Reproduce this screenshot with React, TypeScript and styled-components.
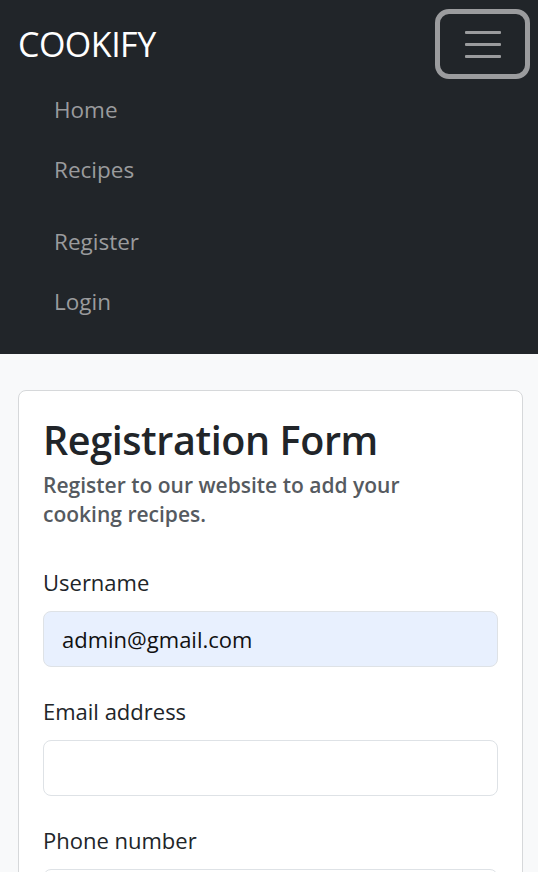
import { createGlobalStyle, styled } from "styled-components"

const GlobalStyle = createGlobalStyle`
  * { box-sizing: border-box; }
  body {
    margin: 0;
    background-color: #f8f9fa;
    font-family: "Open Sans", "Noto Sans", sans-serif;
    color: #212529;
  }
`

const Navbar = styled.nav`
  background-color: #212529;
  padding: 9px 8px 22px 18px;
`

const TopRow = styled.div`
  display: flex;
  align-items: center;
  justify-content: space-between;
`

const Brand = styled.a`
  color: #fff;
  font-size: 34px;
  line-height: 1;
  text-decoration: none;
  letter-spacing: -0.5px;
`

const Toggler = styled.button`
  width: 95px;
  height: 70px;
  border: 5px solid #9b9c9e;
  border-radius: 14px;
  background: transparent;
  display: flex;
  flex-direction: column;
  align-items: center;
  justify-content: center;
  gap: 9px;
  padding: 0;
  span {
    display: block;
    width: 36px;
    height: 3px;
    background-color: #9b9c9e;
    border-radius: 1px;
  }
`

const NavList = styled.ul<{ gap?: number }>`
  list-style: none;
  margin: ${props => props.gap || 0}px 0 0;
  padding: 0 0 0 36px;
  li a {
    display: block;
    height: 60px;
    line-height: 60px;
    font-size: 22.5px;
    color: #9a9b9d;
    text-decoration: none;
  }
`

const Main = styled.main`
  padding: 36px 15px 0 18px;
`

const Card = styled.div`
  background: #fff;
  border: 1px solid #d6d8da;
  border-radius: 8px;
  padding: 25px 24px 40px 24px;
`

const Title = styled.h1`
  margin: 0;
  font-size: 39.5px;
  font-weight: 600;
  line-height: 1.25;
  letter-spacing: -0.4px;
`

const Subtitle = styled.h2`
  margin: 6px 0 35px;
  max-width: 420px;
  font-size: 21px;
  font-weight: 600;
  line-height: 29px;
  color: #555a60;
`

const Group = styled.div`
  margin-bottom: 26px;
`

const Label = styled.label`
  display: block;
  font-size: 22px;
  line-height: 36px;
  margin-bottom: 11px;
`

const Input = styled.input<{ filled?: boolean }>`
  display: block;
  width: 100%;
  height: 56px;
  border: 1px solid #dee2e6;
  border-radius: 8px;
  padding: 0 18px;
  font-family: inherit;
  font-size: 22px;
  color: #111;
  background-color: ${props => (props.filled ? "#e8f0fe" : "#fff")};
  outline: none;
`

export default function App() {
  return (
    <>
      <GlobalStyle />
      <Navbar>
        <TopRow>
          <Brand href="#">COOKIFY</Brand>
          <Toggler aria-label="Toggle navigation">
            <span />
            <span />
            <span />
          </Toggler>
        </TopRow>
        <NavList gap={1}>
          <li><a href="#">Home</a></li>
          <li><a href="#">Recipes</a></li>
        </NavList>
        <NavList gap={12}>
          <li><a href="#">Register</a></li>
          <li><a href="#">Login</a></li>
        </NavList>
      </Navbar>
      <Main>
        <Card>
          <Title>Registration Form</Title>
          <Subtitle>Register to our website to add your cooking recipes.</Subtitle>
          <Group>
            <Label>Username</Label>
            <Input filled defaultValue="admin@gmail.com" />
          </Group>
          <Group>
            <Label>Email address</Label>
            <Input type="email" />
          </Group>
          <Group>
            <Label>Phone number</Label>
            <Input type="tel" />
          </Group>
        </Card>
      </Main>
    </>
  )
}
